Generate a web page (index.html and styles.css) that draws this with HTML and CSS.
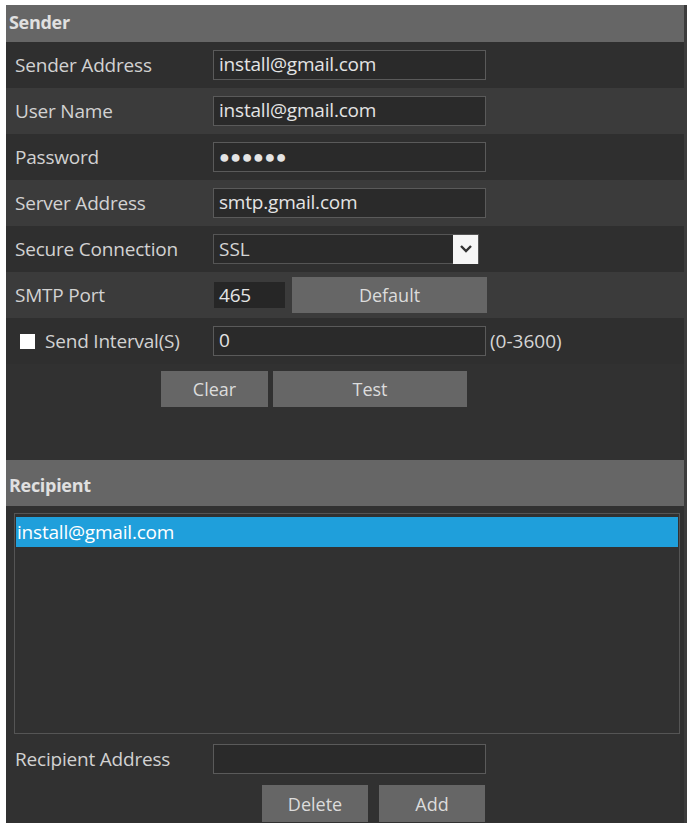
FILE: index.html
```html
<!DOCTYPE html>
<html lang="en">
<head>
    <meta charset="UTF-8">
    <meta name="viewport" content="width=device-width, initial-scale=1.0">
    <title>Email Settings</title>
    <link rel="stylesheet" href="styles.css">
</head>
<body>
    <div class="panel">
        <div class="section-head">Sender</div>

        <div class="row dark">
            <label class="label">Sender Address</label>
            <div class="field wide">install@gmail.com</div>
        </div>
        <div class="row light">
            <label class="label">User Name</label>
            <div class="field wide">install@gmail.com</div>
        </div>
        <div class="row dark">
            <label class="label">Password</label>
            <div class="field wide dots">&#9679;&#9679;&#9679;&#9679;&#9679;&#9679;</div>
        </div>
        <div class="row light">
            <label class="label">Server Address</label>
            <div class="field wide">smtp.gmail.com</div>
        </div>
        <div class="row dark">
            <label class="label">Secure Connection</label>
            <div class="select">
                <span>SSL</span>
                <span class="arrow">
                    <svg width="14" height="10" viewBox="0 0 14 10"><path d="M2 2 L7 7 L12 2" fill="none" stroke="#333" stroke-width="2.4"/></svg>
                </span>
            </div>
        </div>
        <div class="row light">
            <label class="label">SMTP Port</label>
            <div class="field port">465</div>
            <button class="btn default-btn">Default</button>
        </div>
        <div class="row dark">
            <label class="label check-label"><span class="checkbox"></span>Send Interval(S)</label>
            <div class="field wide">0</div>
            <span class="hint">(0-3600)</span>
        </div>
        <div class="actions sender-actions">
            <button class="btn clear-btn">Clear</button>
            <button class="btn test-btn">Test</button>
        </div>

        <div class="section-head recipient-head">Recipient</div>
        <div class="listbox">
            <div class="item selected">install@gmail.com</div>
        </div>
        <div class="row recipient-row">
            <label class="label">Recipient Address</label>
            <div class="field wide"></div>
        </div>
        <div class="actions recipient-actions">
            <button class="btn small-btn">Delete</button>
            <button class="btn small-btn">Add</button>
        </div>
    </div>
</body>
</html>
```

FILE: styles.css
```css
body { margin: 0; padding: 5px 0 0 6px; background: #fff; font-family: "Open Sans", "Noto Sans", Arial, sans-serif; }
.panel { background: #313131; height: 818px; color: #d6d6d6; font-size: 19px; border-right: 3px solid #3c3c3c; box-sizing: border-box; }
.section-head { background: #666; height: 37px; line-height: 34px; padding-left: 3px; font-weight: bold; font-size: 18px; color: #e0e0e0; letter-spacing: -0.3px; }
.recipient-head { height: 46px; line-height: 50px; margin-top: 4px; }
.row { display: flex; align-items: center; height: 46px; }
.dark { background: #2f2f2f; }
.light { background: #3b3b3b; }
.label { width: 207px; padding-left: 9px; box-sizing: border-box; color: #d2d2d2; letter-spacing: -0.2px; }
.field { height: 28px; line-height: 27px; border: 1px solid #5a5a5a; background: #2a2a2a; box-sizing: border-box; padding-left: 5px; color: #e4e4e4; letter-spacing: -0.2px; }
.wide { width: 273px; height: 30px; }
.dots { font-size: 18px; letter-spacing: 0.5px; }
.port { width: 73px; border-color: #3b3b3b; background: #262626; }
.select { display: flex; align-items: center; justify-content: space-between; width: 266px; height: 30px; border: 1px solid #555; background: #2a2a2a; box-sizing: border-box; padding-left: 5px; }
.arrow { display: flex; align-items: center; justify-content: center; width: 25px; height: 29px; background: #f6f6f6; }
.btn { font-family: inherit; font-size: 18px; color: #dcdcdc; background: #666; border: 0; height: 36px; }
.default-btn { width: 195px; margin-left: 6px; }
.check-label { display: flex; align-items: center; padding-left: 14px; }
.checkbox { flex: none; width: 15px; height: 15px; background: #fff; margin-right: 10px; }
.hint { margin-left: 4px; }
.actions { display: flex; gap: 5px; }
.sender-actions { padding-top: 7px; padding-left: 155px; height: 92px; box-sizing: border-box; }
.clear-btn { width: 107px; }
.test-btn { width: 194px; }
.listbox { margin: 7px 4px 0 8px; height: 221px; border: 1px solid #555; box-sizing: border-box; padding: 3px 1px; }
.item { height: 30px; line-height: 30px; padding-left: 1px; letter-spacing: -0.2px; }
.selected { background: #1f9fdb; color: #fff; }
.recipient-row { height: 46px; margin-top: 2px; }
.recipient-actions { padding-left: 256px; gap: 11px; margin-top: 3px; }
.small-btn { width: 106px; height: 37px; }
```
